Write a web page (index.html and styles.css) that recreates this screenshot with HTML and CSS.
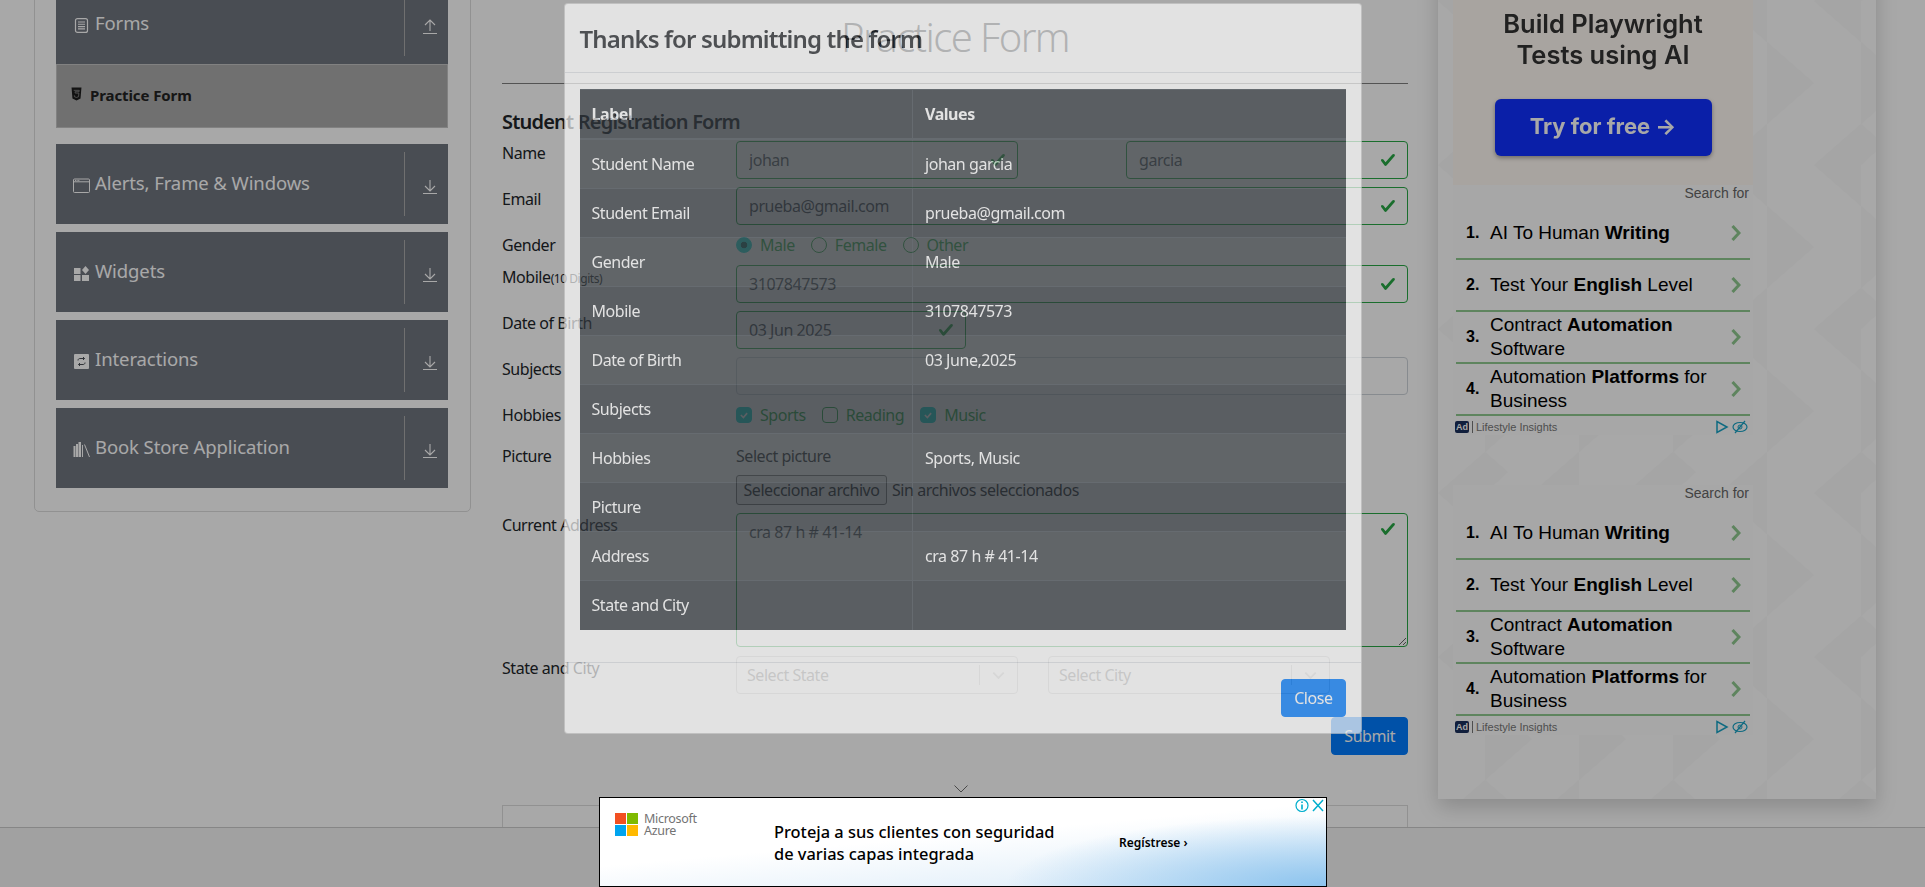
FILE: index.html
```html
<!DOCTYPE html>
<html lang="en">
<head>
  <meta charset="UTF-8">
  <title>Practice Form</title>
  <link rel="stylesheet" href="styles.css">
</head>
<body>

  <div class="page">

    <!-- left menu -->
    <aside class="sidebar">
      <div class="menu-card">
        <div class="group-header">
          <svg class="group-icon" viewBox="0 0 17 15"><rect x="2.500" y=".6" width="12" height="13.800" rx="2" fill="none" stroke="currentColor" stroke-width="1.200"/><path d="M5 4h7M5 6.300h7M5 8.600h7M5 10.900h7" stroke="currentColor" stroke-width="1.100"/></svg>
          <span class="group-name">Forms</span>
          <svg class="group-arrow" viewBox="0 0 14 15"><path d="M0 14.500h14M7 12V1M2 6l5-5 5 5" fill="none" stroke="currentColor" stroke-width="1.100"/></svg>
        </div>
        <div class="active-item">
          <svg class="item-icon" viewBox="0 0 12 14"><path d="M.6 0h10.800l-1 12L6 14 1.600 12z" fill="#1c1c1c"/><path d="M3 3h6l-.2 1.500H4.500l.1 1.500h4l-.4 4L6 10.800 3.800 10l-.1-1.500" fill="none" stroke="#8a8a8a" stroke-width=".9"/></svg>
          Practice Form
        </div>

        <div class="group-header spaced">
          <svg class="group-icon" viewBox="0 0 17 15"><rect x=".5" y="1" width="16" height="13.500" rx="1" fill="none" stroke="currentColor" stroke-width="1"/><path d="M.5 3.800h16" stroke="currentColor" stroke-width="1"/><path d="M2 2.400h5" stroke="currentColor" stroke-dasharray="1 .6"/></svg>
          <span class="group-name">Alerts, Frame &amp; Windows</span>
          <svg class="group-arrow" viewBox="0 0 14 15"><path d="M0 14.500h14M7 1v11M2 7l5 5 5-5" fill="none" stroke="currentColor" stroke-width="1.100"/></svg>
        </div>
        <div class="group-header">
          <svg class="group-icon" viewBox="0 0 17 15"><path d="M1 2h6.500v6H1zM1 9h6.500v6H1zM9 9h7v6H9z" fill="currentColor"/><path d="M12.500 0l3.500 4-3.500 4L9 4z" fill="currentColor"/></svg>
          <span class="group-name">Widgets</span>
          <svg class="group-arrow" viewBox="0 0 14 15"><path d="M0 14.500h14M7 1v11M2 7l5 5 5-5" fill="none" stroke="currentColor" stroke-width="1.100"/></svg>
        </div>
        <div class="group-header">
          <svg class="group-icon" viewBox="0 0 17 15"><rect x="1" y="0" width="15" height="15" rx="1" fill="currentColor"/><path d="M5 6.500C5 5 6 4.500 7 4.500h4.500M10 3l1.500 1.500L10 6M12 8.500C12 10 11 10.500 10 10.500H5.500M7 12l-1.500-1.500L7 9" fill="none" stroke="#4a4e55" stroke-width="1"/></svg>
          <span class="group-name">Interactions</span>
          <svg class="group-arrow" viewBox="0 0 14 15"><path d="M0 14.500h14M7 1v11M2 7l5 5 5-5" fill="none" stroke="currentColor" stroke-width="1.100"/></svg>
        </div>
        <div class="group-header">
          <svg class="group-icon" viewBox="0 0 17 15"><path d="M.5 4h2v11h-2zM3 2h2v13H3zM5.500 0h2.500v15H5.500z" fill="currentColor"/><path d="M9.500 3v12M11.500 2.500l5 12.500" fill="none" stroke="currentColor" stroke-width="1"/></svg>
          <span class="group-name">Book Store Application</span>
          <svg class="group-arrow" viewBox="0 0 14 15"><path d="M0 14.500h14M7 1v11M2 7l5 5 5-5" fill="none" stroke="currentColor" stroke-width="1.100"/></svg>
        </div>
      </div>
    </aside>

    <!-- practice form -->
    <main class="main">
      <h1 class="page-title">Practice Form</h1>
      <hr class="title-rule">
      <h5 class="form-title">Student Registration Form</h5>

      <form class="reg-form">
        <div class="form-row">
          <label>Name</label>
          <div class="split">
            <input class="field valid half" type="text" value="johan">
            <input class="field valid half" type="text" value="garcia">
          </div>
        </div>

        <div class="form-row">
          <label>Email</label>
          <input class="field valid" type="text" value="prueba@gmail.com">
        </div>

        <div class="form-row">
          <label>Gender</label>
          <div class="options">
            <span class="option"><input type="radio" name="gender" checked>Male</span>
            <span class="option"><input type="radio" name="gender">Female</span>
            <span class="option"><input type="radio" name="gender">Other</span>
          </div>
        </div>

        <div class="form-row">
          <label>Mobile<small>(10 Digits)</small></label>
          <input class="field valid" type="text" value="3107847573">
        </div>

        <div class="form-row">
          <label>Date of Birth</label>
          <input class="field valid dob" type="text" value="03 Jun 2025">
        </div>

        <div class="form-row">
          <label>Subjects</label>
          <div class="field plain"></div>
        </div>

        <div class="form-row">
          <label>Hobbies</label>
          <div class="options">
            <span class="option"><input type="checkbox" checked>Sports</span>
            <span class="option"><input type="checkbox">Reading</span>
            <span class="option"><input type="checkbox" checked>Music</span>
          </div>
        </div>

        <div class="form-row picture-row">
          <label>Picture</label>
          <div>
            <div class="picture-label">Select picture</div>
            <div class="file-pick">
              <button type="button" class="file-btn">Seleccionar archivo</button>
              <span>Sin archivos seleccionados</span>
            </div>
          </div>
        </div>

        <div class="form-row">
          <label>Current Address</label>
          <textarea class="field valid address">cra 87 h # 41-14</textarea>
        </div>

        <div class="form-row state-row">
          <label>State and City</label>
          <div class="selects">
            <div class="select-box">
              <span class="select-text">Select State</span>
              <svg class="select-chevron" viewBox="0 0 20 20"><path d="M4.500 7.500 10 13l5.500-5.500" fill="none" stroke="#ccc" stroke-width="2"/></svg>
            </div>
            <div class="select-box">
              <span class="select-text">Select City</span>
              <svg class="select-chevron" viewBox="0 0 20 20"><path d="M4.500 7.500 10 13l5.500-5.500" fill="none" stroke="#ccc" stroke-width="2"/></svg>
            </div>
          </div>
        </div>

        <div class="submit-row">
          <button type="button" class="btn">Submit</button>
        </div>
      </form>

      <svg class="more-chevron" viewBox="0 0 14 8"><path d="M.5.5 7 7 13.500.5" fill="none" stroke="#6f6f6f" stroke-width="1"/></svg>
      <div class="lower-box"></div>
    </main>

    <!-- right ads -->
    <aside class="ads">
      <svg class="ads-pattern" width="100%" height="100%">
        <defs>
          <pattern id="tri" width="188" height="164" patternUnits="userSpaceOnUse">
            <path d="M0 41 47 0V82zM94 41 141 0V82zM47 82 94 123 47 164zM141 82 188 123 141 164zM47 0 70 20 47 41zM141 123 164 143 141 164z" fill="#000" fill-opacity=".02"/>
            <path d="M0 41 47 0 94 41 141 0 188 41M0 123 47 82 94 123 141 82 188 123M47 0V164M141 0V164M94 41V123M0 41V123" fill="none" stroke="#fff" stroke-opacity=".09"/>
          </pattern>
        </defs>
        <rect width="100%" height="100%" fill="url(#tri)"/>
      </svg>

      <div class="ad-promo">
        <div class="promo-title">Build Playwright<br>Tests using AI</div>
        <div class="promo-btn">Try for free →</div>
      </div>

      <div class="search-ad">
        <div class="search-for">Search for</div>
        <div class="search-row"><b class="num">1.</b><span class="search-text">AI To Human <b>Writing</b></span><svg class="row-chevron" viewBox="0 0 10 16"><path d="M1.500 1 8 8l-6.500 7" fill="none" stroke="#8fc98f" stroke-width="3"/></svg></div>
        <div class="search-row"><b class="num">2.</b><span class="search-text">Test Your <b>English</b> Level</span><svg class="row-chevron" viewBox="0 0 10 16"><path d="M1.500 1 8 8l-6.500 7" fill="none" stroke="#8fc98f" stroke-width="3"/></svg></div>
        <div class="search-row"><b class="num">3.</b><span class="search-text">Contract <b>Automation</b> Software</span><svg class="row-chevron" viewBox="0 0 10 16"><path d="M1.500 1 8 8l-6.500 7" fill="none" stroke="#8fc98f" stroke-width="3"/></svg></div>
        <div class="search-row"><b class="num">4.</b><span class="search-text">Automation <b>Platforms</b> for Business</span><svg class="row-chevron" viewBox="0 0 10 16"><path d="M1.500 1 8 8l-6.500 7" fill="none" stroke="#8fc98f" stroke-width="3"/></svg></div>
        <div class="ad-foot">
          <span class="ad-badge">Ad</span><span class="ad-source">Lifestyle Insights</span>
          <svg class="ad-tools" viewBox="0 0 32 14"><path d="M1 1.500v11L11 7z" fill="none" stroke="#17a2c4" stroke-width="1.500"/><ellipse cx="24" cy="7" rx="7" ry="4.500" fill="none" stroke="#17a2c4" stroke-width="1.200"/><circle cx="24" cy="7" r="2" fill="none" stroke="#17a2c4"/><path d="M19 13 29 1" stroke="#17a2c4" stroke-width="1.200"/></svg>
        </div>
      </div>

      <div class="search-ad second">
        <div class="search-for">Search for</div>
        <div class="search-row"><b class="num">1.</b><span class="search-text">AI To Human <b>Writing</b></span><svg class="row-chevron" viewBox="0 0 10 16"><path d="M1.500 1 8 8l-6.500 7" fill="none" stroke="#8fc98f" stroke-width="3"/></svg></div>
        <div class="search-row"><b class="num">2.</b><span class="search-text">Test Your <b>English</b> Level</span><svg class="row-chevron" viewBox="0 0 10 16"><path d="M1.500 1 8 8l-6.500 7" fill="none" stroke="#8fc98f" stroke-width="3"/></svg></div>
        <div class="search-row"><b class="num">3.</b><span class="search-text">Contract <b>Automation</b> Software</span><svg class="row-chevron" viewBox="0 0 10 16"><path d="M1.500 1 8 8l-6.500 7" fill="none" stroke="#8fc98f" stroke-width="3"/></svg></div>
        <div class="search-row"><b class="num">4.</b><span class="search-text">Automation <b>Platforms</b> for Business</span><svg class="row-chevron" viewBox="0 0 10 16"><path d="M1.500 1 8 8l-6.500 7" fill="none" stroke="#8fc98f" stroke-width="3"/></svg></div>
        <div class="ad-foot">
          <span class="ad-badge">Ad</span><span class="ad-source">Lifestyle Insights</span>
          <svg class="ad-tools" viewBox="0 0 32 14"><path d="M1 1.500v11L11 7z" fill="none" stroke="#17a2c4" stroke-width="1.500"/><ellipse cx="24" cy="7" rx="7" ry="4.500" fill="none" stroke="#17a2c4" stroke-width="1.200"/><circle cx="24" cy="7" r="2" fill="none" stroke="#17a2c4"/><path d="M19 13 29 1" stroke="#17a2c4" stroke-width="1.200"/></svg>
        </div>
      </div>
    </aside>
  </div>

  <footer class="footer"></footer>
  <div class="backdrop"></div>

  <!-- submitted dialog -->
  <div class="modal">
    <div class="modal-content">
      <div class="modal-header">Thanks for submitting the form</div>
      <div class="modal-body">
        <table class="result-table">
          <thead>
            <tr><th>Label</th><th>Values</th></tr>
          </thead>
          <tbody>
            <tr><td>Student Name</td><td>johan garcia</td></tr>
            <tr><td>Student Email</td><td>prueba@gmail.com</td></tr>
            <tr><td>Gender</td><td>Male</td></tr>
            <tr><td>Mobile</td><td>3107847573</td></tr>
            <tr><td>Date of Birth</td><td>03 June,2025</td></tr>
            <tr><td>Subjects</td><td></td></tr>
            <tr><td>Hobbies</td><td>Sports, Music</td></tr>
            <tr><td>Picture</td><td></td></tr>
            <tr><td>Address</td><td>cra 87 h # 41-14</td></tr>
            <tr><td>State and City</td><td></td></tr>
          </tbody>
        </table>
      </div>
      <div class="modal-footer">
        <button type="button" class="btn">Close</button>
      </div>
    </div>
  </div>

  <!-- bottom banner -->
  <div class="banner">
    <div class="ms-logo">
      <div class="ms-squares"><i class="sq-red"></i><i class="sq-green"></i><i class="sq-blue"></i><i class="sq-yellow"></i></div>
      <div class="ms-name">Microsoft<br>Azure</div>
    </div>
    <div class="banner-text">Proteja a sus clientes con seguridad<br>de varias capas integrada</div>
    <div class="banner-cta">Regístrese ›</div>
    <div class="banner-tools">
      <svg class="tool-icon" viewBox="0 0 14 14"><circle cx="7" cy="7" r="6" fill="none" stroke="#00aecd" stroke-width="1.200"/><path d="M7 6v5M7 3v1.600" stroke="#00aecd" stroke-width="1.600"/></svg>
      <svg class="tool-icon" viewBox="0 0 14 14"><path d="M2 1.500 12 12.500M12 1.500 2 12.500" stroke="#00aecd" stroke-width="1.500"/></svg>
    </div>
  </div>

</body>
</html>
```

FILE: styles.css
```css
* {
  box-sizing: border-box;
}

html, body {
  height: 100%;
}

body {
  margin: 0;
  overflow: hidden;
  background: white;
  color: #212529;
  font-family: "Noto Sans", sans-serif;
  font-size: 16px;
  line-height: 24px;
  letter-spacing: -0.45px;
}

.page {
  display: flex;
  align-items: flex-start;
  margin-top: -40px;
  padding-left: 34px;
}

/* left menu */
.sidebar {
  width: 437px;
  flex: none;
}

.menu-card {
  padding: 23px 22px 15px 21px;
  border: 1px solid #ddd;
  border-radius: 5px;
}

.group-header {
  display: flex;
  align-items: center;
  height: 80px;
  padding-left: 17px;
  margin-bottom: 8px;
  background: #70757f;
  color: white;
  position: relative;
}

.group-header:first-child {
  margin-bottom: 0;
}

.group-header.spaced {
  margin-top: 16px;
}

.group-header::after {
  content: "";
  position: absolute;
  right: 43px;
  top: 8px;
  bottom: 8px;
  width: 1px;
  background: #aaa;
}

.group-icon {
  width: 17px;
  height: 15px;
  margin-right: 5px;
  margin-top: 3px;
  flex: none;
}

.group-name {
  margin-top: -3px;
  font-size: 18.500px;
  letter-spacing: -0.1px;
}

.group-arrow {
  width: 14px;
  height: 15px;
  position: absolute;
  right: 11px;
  top: 35px;
}

.active-item {
  display: flex;
  align-items: center;
  height: 64px;
  padding: 0 0 2px 14px;
  background: #aaa;
  border: 1px solid #c4c4c4;
  font-size: 15px;
  font-weight: 700;
  color: #222;
  letter-spacing: -0.1px;
}

.item-icon {
  width: 11px;
  height: 14px;
  margin-right: 8px;
  margin-top: -2px;
}

/* form */
.main {
  width: 906px;
  margin-left: 31px;
  flex: none;
}

.page-title {
  margin: 0;
  padding-top: 53px;
  font-size: 40px;
  font-weight: 300;
  line-height: 48px;
  text-align: center;
  letter-spacing: -1.6px;
}

.title-rule {
  margin: 22px 0 0;
  border: 0;
  border-top: 1px solid rgba(0, 0, 0, 0.5);
}

.form-title {
  margin: 26px 0 7px;
  font-size: 20px;
  font-weight: 600;
  line-height: 24px;
  letter-spacing: -0.8px;
}

.form-row {
  display: grid;
  grid-template-columns: 234px 1fr;
  margin-bottom: 8px;
}

.form-row label small {
  font-size: 12px;
}

.split {
  display: flex;
  justify-content: space-between;
}

.field {
  display: block;
  width: 100%;
  height: 38px;
  padding: 6px 12px;
  border: 1px solid #ced4da;
  border-radius: 4px;
  background-color: white;
  color: #495057;
  font: inherit;
  letter-spacing: inherit;
}

.field.valid {
  border-color: #28a745;
  background-image: url("data:image/svg+xml,%3Csvg xmlns='http://www.w3.org/2000/svg' viewBox='0 0 8 8'%3E%3Cpath fill='%2328a745' d='M2.300 6.730L.6 4.530c-.4-1.040.46-1.400 1.100-.8l1.060 1.370 3.400-3.800c.6-.63 1.600-.27 1.200.7l-4 4.600c-.43.5-.8.4-1.100.1z'/%3E%3C/svg%3E");
  background-repeat: no-repeat;
  background-position: right 11px center;
  background-size: 16px 16px;
}

.half {
  width: 282px;
}

.dob {
  width: 230px;
}

.address {
  height: 134px;
  background-position: top 7px right 11px !important;
  resize: vertical;
}

.options {
  display: flex;
  gap: 16px;
  height: 24px;
  color: #28a745;
}

.option {
  display: flex;
  align-items: center;
}

.option input {
  appearance: none;
  width: 16px;
  height: 16px;
  margin: 0 8px 0 0;
  border: 1px solid #28a745;
  background: white;
}

.option input[type="radio"] {
  border-radius: 50%;
}

.option input[type="checkbox"] {
  border-radius: 4px;
}

.option input:checked {
  background: #14d8d0;
  border-color: #14d8d0;
}

.option input[type="radio"]:checked {
  background: radial-gradient(circle, #0a5a58 0 3px, #14d8d0 3.600px);
}

.option input[type="checkbox"]:checked {
  background: #14d8d0 url("data:image/svg+xml,%3Csvg xmlns='http://www.w3.org/2000/svg' viewBox='0 0 8 8'%3E%3Cpath fill='none' stroke='%23fff' stroke-width='1.300' d='M1.500 4l2 2 3-3.500'/%3E%3C/svg%3E") center / 10px no-repeat;
}

.picture-row {
  padding-top: 9px;
}

.picture-label {
  margin-bottom: 7px;
}

.file-pick {
  display: flex;
  align-items: center;
  gap: 5px;
}

.file-btn {
  height: 30px;
  padding: 0;
  width: 151px;
  background: #efefef;
  border: 1px solid #767676;
  border-radius: 3px;
  color: #212529;
  font: inherit;
  letter-spacing: inherit;
  white-space: nowrap;
}

.state-row {
  margin-top: 9px;
}

.selects {
  display: flex;
  gap: 30px;
}

.select-box {
  display: flex;
  align-items: center;
  width: 282px;
  height: 38px;
  padding-left: 10px;
  border: 1px solid #ccc;
  border-radius: 4px;
  color: #808080;
}

.select-text {
  flex: 1;
}

.select-chevron {
  width: 38px;
  height: 20px;
  padding: 0 9px;
  border-left: 1px solid #ccc;
  box-sizing: border-box;
}

.submit-row {
  display: flex;
  justify-content: flex-end;
  margin-top: 23px;
}

.btn {
  height: 38px;
  padding: 0 12px;
  background: #007bff;
  border: 1px solid #007bff;
  border-radius: 4px;
  color: white;
  font: inherit;
  letter-spacing: inherit;
}

.more-chevron {
  display: block;
  width: 14px;
  height: 8px;
  margin: 30px 0 12px 452px;
}

.lower-box {
  height: 120px;
  border: 1px solid #ddd;
}

/* right ads */
.ads {
  position: relative;
  width: 438px;
  height: 839px;
  margin-left: 30px;
  padding-left: 15px;
  flex: none;
  background: white;
  box-shadow: 0 8px 20px rgba(0, 0, 0, 0.18);
}

.ads-pattern {
  position: absolute;
  left: 0;
  top: 0;
}

.ad-promo {
  position: relative;
  width: 300px;
  height: 225px;
  padding-top: 48px;
  background: #fff9f3;
  text-align: center;
  font-family: Inter, sans-serif;
  letter-spacing: 0;
}

.promo-title {
  font-size: 25.500px;
  font-weight: 600;
  line-height: 31px;
  color: #333;
  filter: blur(0.4px);
}

.promo-btn {
  width: 217px;
  height: 57px;
  margin: 29px auto 0;
  background: #1030ff;
  border-radius: 6px;
  box-shadow: 0 2px 4px rgba(0, 0, 0, 0.35);
  color: white;
  font-size: 22px;
  font-weight: 700;
  line-height: 55px;
  filter: blur(0.4px);
}

.search-ad {
  position: relative;
  width: 300px;
  height: 250px;
  padding: 0 3px;
  background: #fdfdfd;
  font-family: "Liberation Sans", Arial, sans-serif;
  letter-spacing: 0;
  color: black;
}

.search-ad.second {
  margin-top: 50px;
}

.search-for {
  height: 23px;
  padding: 0 1px 0 0;
  text-align: right;
  font-size: 14px;
  line-height: 17px;
  color: #666;
}

.search-row {
  display: flex;
  align-items: center;
  height: 52px;
  padding: 0 9px 0 10px;
  border-bottom: 2px solid #8fc98f;
  font-size: 19px;
  line-height: 24px;
}

.num {
  width: 24px;
  flex: none;
  font-size: 16px;
}

.search-text {
  flex: 1;
}

.row-chevron {
  width: 10px;
  height: 16px;
  flex: none;
}

.ad-foot {
  display: flex;
  align-items: center;
  height: 22px;
  margin-left: -1px;
  color: #777;
}

.ad-badge {
  width: 14px;
  height: 12px;
  background: #1a2f5c;
  border-radius: 2px;
  color: white;
  font-size: 9px;
  font-weight: 700;
  line-height: 12px;
  text-align: center;
}

.ad-source {
  flex: 1;
  margin-left: 3px;
  padding-left: 3px;
  border-left: 1px solid #777;
  line-height: 12px;
  font-size: 11px;
}

.ad-tools {
  width: 32px;
  height: 14px;
  margin-right: 2px;
}

/* footer, backdrop */
.footer {
  position: fixed;
  left: 0;
  right: 0;
  bottom: 0;
  height: 60px;
  background: #f4f4f4;
  border-top: 1px solid #ccc;
}

.backdrop {
  position: fixed;
  inset: 0;
  background: rgba(0, 0, 0, 0.34);
}

/* dialog */
.modal {
  position: fixed;
  inset: 0;
  display: flex;
  justify-content: center;
  align-items: flex-start;
  padding-top: 3px;
}

.modal-content {
  width: 798px;
  background: white;
  border: 1px solid rgba(0, 0, 0, 0.2);
  border-radius: 4px;
  opacity: 0.667;
}

.modal-header {
  height: 69px;
  padding: 17px 15px 15px;
  border-bottom: 1px solid #dee2e6;
  font-size: 24px;
  font-weight: 600;
  line-height: 36px;
  letter-spacing: -0.85px;
}

.modal-body {
  padding: 16px 15px;
}

.result-table {
  width: 100%;
  margin-bottom: 16px;
  border-collapse: collapse;
  background: #343a40;
  color: white;
}

.result-table th,
.result-table td {
  padding: 12px;
  height: 49px;
  border-top: 1px solid #454d55;
  text-align: left;
  vertical-align: middle;
}

.result-table th:first-child,
.result-table td:first-child {
  width: 333px;
}

.result-table th + th,
.result-table td + td {
  border-left: 1px solid #454d55;
}

.result-table th {
  border-bottom: 2px solid #454d55;
}

.result-table tbody tr:nth-child(odd) {
  background: rgba(255, 255, 255, 0.05);
}

.modal-footer {
  display: flex;
  justify-content: flex-end;
  padding: 16px 15px;
  border-top: 1px solid #dee2e6;
}

/* bottom banner */
.banner {
  position: fixed;
  left: 599px;
  bottom: 0;
  width: 728px;
  height: 90px;
  border: 1px solid black;
  background: radial-gradient(ellipse 320px 70px at 100% 100%, #8dc4ee, rgba(141, 196, 238, 0) 100%), linear-gradient(175deg, white 45%, #d9eaf8 100%);
  color: black;
  letter-spacing: 0;
}

.ms-logo {
  position: absolute;
  left: 15px;
  top: 15px;
  display: flex;
  gap: 6px;
}

.ms-squares {
  display: grid;
  grid-template-columns: 11px 11px;
  grid-auto-rows: 11px;
  gap: 1px;
}

.sq-red { background: #f25022; }
.sq-green { background: #7fba00; }
.sq-blue { background: #00a4ef; }
.sq-yellow { background: #ffb900; }

.ms-name {
  font-size: 12.500px;
  line-height: 12px;
  color: #737373;
  letter-spacing: -0.3px;
}

.banner-text {
  position: absolute;
  left: 174px;
  top: 23px;
  font-size: 16.400px;
  font-weight: 500;
  line-height: 22px;
}

.banner-cta {
  position: absolute;
  left: 519px;
  top: 35px;
  font-size: 12px;
  line-height: 20px;
  font-weight: 600;
}

.banner-tools {
  position: absolute;
  right: 1px;
  top: 0;
  display: flex;
  gap: 2px;
}

.tool-icon {
  width: 14px;
  height: 15px;
}
```
